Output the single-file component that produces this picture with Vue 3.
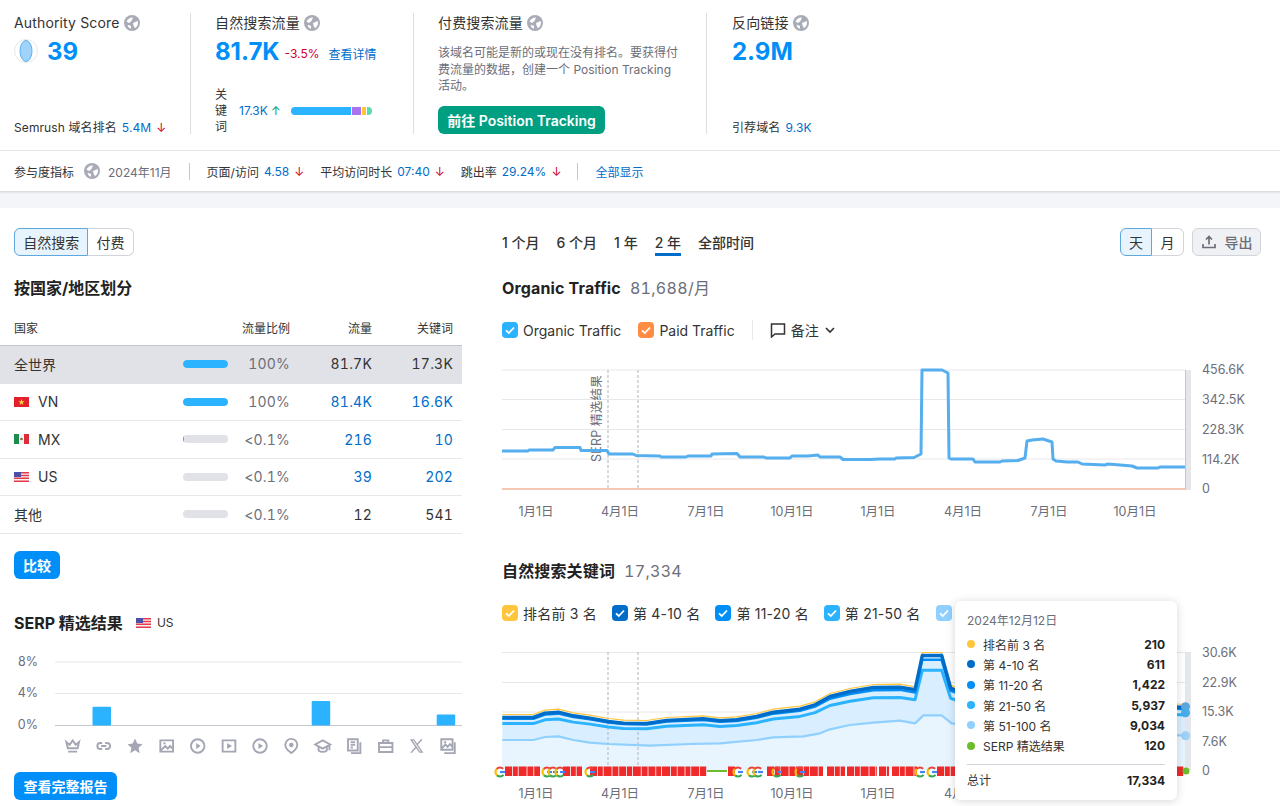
<script setup>
const rows = [
  { name: '全世界', flag: '', bar: 100, pct: '100%', traffic: '81.7K', kw: '17.3K', total: true },
  { name: 'VN', flag: 'vn', bar: 100, pct: '100%', traffic: '81.4K', kw: '16.6K', link: true },
  { name: 'MX', flag: 'mx', bar: 2, pct: '<0.1%', traffic: '216', kw: '10', link: true },
  { name: 'US', flag: 'us', bar: 0, pct: '<0.1%', traffic: '39', kw: '202', link: true },
  { name: '其他', flag: '', bar: 0, pct: '<0.1%', traffic: '12', kw: '541' },
];

const tabs = ['1 个月', '6 个月', '1 年', '2 年', '全部时间'];

// white land patches on the grey globe
const globeD = 'M2.500 6.500C4 3.500 6.500 2.300 9 2.500L7.500 6 5 8zM9 8l4.700-2c.8 2.500 0 5.500-2.700 7.200L9.500 10.500zM4.500 10l2.500 1v2.800C5.300 13.300 4 12 3.500 10.500z';

const serpIcons = [
  { d: 'M3.500 6.500l4.500 4L12 4.500l4 6 4.500-4-2 8.500h-13zM6 19.500h12' },
  { d: 'M10 8H7.500a4 4 0 000 8H10M14 8h2.500a4 4 0 010 8H14M8.500 12h7' },
  { f: 'M12 2l3 6.800 7 .7-5.200 4.800 1.500 7.200-6.300-3.700-6.300 3.700 1.500-7.200L2 9.500l7-.7z' },
  { d: 'M3.500 4.500h17v15h-17zM4 18l6-6 3.500 3.500 3-3.500 3.500 3.500M7.500 8.500h3' },
  { d: 'M12 3a9 9 0 100 18 9 9 0 000-18z', f: 'M10 8l6 4-6 4z' },
  { d: 'M3.500 4.500h17v15h-17z', f: 'M9.500 8l6.500 4-6.500 4z' },
  { d: 'M12 3a9 9 0 100 18 9 9 0 000-18z', f: 'M10 8l6 4-6 4z' },
  { d: 'M12 2.500a8 8 0 00-8 8c0 5 5 8.500 8 11 3-2.500 8-6 8-11a8 8 0 00-8-8z', f: 'M12 7.500a3 3 0 100 6 3 3 0 000-6z' },
  { d: 'M12 4.500L2 10l10 5.500L22 10zM6.500 13v5c3 2.500 8 2.500 11 0v-5M21 10.500v7' },
  { d: 'M4 3h13v15H4zM7.500 7h6M7.500 10.500h6M7.500 14h3M20.500 7v14.500H8' },
  { d: 'M3 8h18v12H3zM8.500 8V4.500h7V8M3 13.500h18M10 13.500h4' },
  { f: 'M3 3h5.500l4 5.500L17.500 3H20l-6.300 7.300L21 21h-5.500l-4.400-6L5.800 21H3.300l6.600-7.600zM6.500 4.800L16.400 19.200h1.300L7.800 4.800z' },
  { d: 'M3 3h15v14H3zM3.500 15l5-5 3 3 3-3.500 3 3M6.500 7h3M21 7v14.500H7' },
];
const iconXs = [72.7, 103.7, 135, 166.7, 197.7, 229, 260, 291.3, 322.7, 354, 385.7, 416.7, 448];

// traffic line, page coordinates
const trafficPts = [
  [502, 451], [528, 451], [529, 450], [553, 450], [555, 447.5], [580, 447.5], [581, 450.5], [607, 450.5],
  [609, 454], [633, 454], [636, 455.5], [660, 456], [661, 457], [686, 457], [688, 456], [711, 456],
  [712, 454], [737, 453.5], [740, 457], [764, 457], [766, 458], [790, 458], [792, 456], [808, 456],
  [818, 455], [820, 457], [840, 457], [843, 459.5], [870, 459.5], [880, 459], [895, 459], [896, 458],
  [914, 457.5], [921, 454], [922, 370], [942, 370], [948, 373], [949, 458], [951, 459], [973, 459],
  [975, 462], [1000, 462], [1002, 461], [1018, 460.5], [1025, 458], [1027, 441], [1032, 440], [1043, 439],
  [1052, 442], [1053, 459], [1056, 461], [1067, 462], [1078, 462], [1082, 464], [1105, 465], [1108, 464],
  [1132, 466], [1137, 468], [1158, 468], [1160, 467], [1185, 467],
];

const toPath = (pts) => pts.map((p, i) => (i ? 'L' : 'M') + p[0] + ' ' + p[1]).join(' ');
const page = (pts) => pts.map(([x, y]) => [490 + x / 3, 640 + y / 3]);

const topLine = page([
  [37, 228], [130, 228], [165, 215], [205, 212], [250, 223], [300, 230], [355, 240], [400, 245], [470, 246],
  [530, 237], [640, 232], [690, 238], [740, 235], [800, 225], [850, 212], [930, 203], [975, 190], [1020, 165],
  [1080, 150], [1150, 138], [1230, 137], [1275, 145], [1297, 42], [1355, 42], [1382, 140], [1395, 145],
  [1450, 160], [2085, 198],
]);
const lowLine = page([
  [37, 300], [130, 300], [165, 291], [205, 289], [250, 300], [300, 308], [355, 312], [480, 317], [600, 312],
  [690, 310], [800, 300], [850, 292], [940, 289], [990, 280], [1020, 268], [1080, 255], [1150, 248], [1230, 242],
  [1275, 250], [1300, 226], [1355, 226], [1385, 250], [1500, 260], [2085, 287],
]);
const BASE = 770;
const scaled = (r, shift = 0) => topLine.map(([x, y]) => [x, BASE - (BASE - y) * r + shift]);
const closeArea = (pts) => toPath(pts) + ` L${pts[pts.length - 1][0]} ${BASE} L${pts[0][0]} ${BASE} Z`;

const areaTop = closeArea(topLine);
const areaLow = closeArea(lowLine);
const yellowPath = toPath(scaled(1, -1.5));
const darkPath = toPath(scaled(1, 1.5));
const midPath = toPath(scaled(0.95, 0));
const brightPath = toPath(scaled(0.86));
const lowPath = toPath(lowLine);

// SERP feature flags along the bottom of the keywords chart
const flagRuns = [[505, 540], [563, 582], [590, 707], [728, 735], [767, 823], [827, 845], [847, 877], [879, 889], [892, 917], [937, 955], [1176, 1184]];
const flags = [];
const widths = [7, 5, 8, 6];
flagRuns.forEach(([a, b]) => {
  let x = a;
  let i = 0;
  while (x < b) {
    const w = Math.min(widths[i % 4], b - x);
    flags.push({ x, w });
    x += w + 0.8;
    i++;
  }
});
const googles = [500, 547, 553, 560, 590, 738, 752, 758, 777, 800, 920, 932];

const gridOne = [370, 399.5, 429.5, 459];
const gridTwo = [652.5, 682.5, 712, 742];
const yOne = [[369, '456.6K'], [399, '342.5K'], [429, '228.3K'], [459, '114.2K'], [488, '0']];
const yTwo = [[652, '30.6K'], [682, '22.9K'], [711, '15.3K'], [741, '7.6K'], [770, '0']];
const months = [[536, '1月1日'], [620, '4月1日'], [706, '7月1日'], [792, '10月1日'], [878, '1月1日'], [963, '4月1日'], [1049, '7月1日'], [1135, '10月1日']];

// the last label sits under the tooltip in the reference, only its box shows
const legendTwo = [
  { label: '排名前 3 名', cls: 'c-yellow' },
  { label: '第 4-10 名', cls: 'c-dark' },
  { label: '第 11-20 名', cls: 'c-mid' },
  { label: '第 21-50 名', cls: 'c-bright' },
  { label: '', cls: 'c-pale' },
];

const tipRows = [
  { label: '排名前 3 名', value: '210', cls: 'c-yellow' },
  { label: '第 4-10 名', value: '611', cls: 'c-dark' },
  { label: '第 11-20 名', value: '1,422', cls: 'c-mid' },
  { label: '第 21-50 名', value: '5,937', cls: 'c-bright' },
  { label: '第 51-100 名', value: '9,034', cls: 'c-pale' },
  { label: 'SERP 精选结果', value: '120', cls: 'c-green' },
];
</script>

<template>
  <div class="page">
    <section class="summary">
      <div class="metrics">
        <div class="metric m1">
          <div>
            <div class="m-title">Authority Score <svg class="globe" viewBox="0 0 16 16"><circle cx="8" cy="8" r="8" fill="#a9abb6"/><path :d="globeD" fill="#fff"/></svg></div>
            <div class="m-big score">
              <svg class="ring" viewBox="0 0 24 24"><circle cx="12" cy="12" r="11.500" fill="#fff" stroke="#e7e8ec"/><ellipse cx="12" cy="12" rx="6" ry="10.500" fill="#9fd3fb" stroke="#5eb2ee"/></svg>
              <span class="num">39</span>
            </div>
          </div>
          <div class="m-foot">Semrush 域名排名 <a class="lnk">5.4M</a> <span class="down">↓</span></div>
        </div>

        <div class="metric m2">
          <div>
            <div class="m-title">自然搜索流量 <svg class="globe" viewBox="0 0 16 16"><circle cx="8" cy="8" r="8" fill="#a9abb6"/><path :d="globeD" fill="#fff"/></svg></div>
            <div class="m-big">
              <span class="num">81.7K</span>
              <span class="delta">-3.5%</span>
              <a class="lnk detail">查看详情</a>
            </div>
          </div>
          <div class="kw-row">
            <span class="kw-label">关键词</span>
            <a class="lnk">17.3K</a>
            <span class="up">↑</span>
            <div class="stack">
              <i class="s-blue"></i><i class="s-purple"></i><i class="s-orange"></i><i class="s-green"></i>
            </div>
          </div>
        </div>

        <div class="metric m3">
          <div>
            <div class="m-title">付费搜索流量 <svg class="globe" viewBox="0 0 16 16"><circle cx="8" cy="8" r="8" fill="#a9abb6"/><path :d="globeD" fill="#fff"/></svg></div>
            <p class="note">该域名可能是新的或现在没有排名。要获得付费流量的数据，创建一个 Position Tracking 活动。</p>
          </div>
          <button class="btn green">前往 Position Tracking</button>
        </div>

        <div class="metric m4">
          <div>
            <div class="m-title">反向链接 <svg class="globe" viewBox="0 0 16 16"><circle cx="8" cy="8" r="8" fill="#a9abb6"/><path :d="globeD" fill="#fff"/></svg></div>
            <div class="m-big"><span class="num">2.9M</span></div>
          </div>
          <div class="m-foot">引荐域名 <a class="lnk">9.3K</a></div>
        </div>
      </div>

      <div class="engage">
        <span class="e-label">参与度指标</span>
        <svg class="globe e-globe" viewBox="0 0 16 16"><circle cx="8" cy="8" r="8" fill="#a9abb6"/><path :d="globeD" fill="#fff"/></svg>
        <span class="muted">2024年11月</span>
        <i class="vsep"></i>
        <span class="pair">页面/访问 <a class="lnk">4.58</a> <span class="down">↓</span></span>
        <span class="pair">平均访问时长 <a class="lnk">07:40</a> <span class="down">↓</span></span>
        <span class="pair">跳出率 <a class="lnk">29.24%</a> <span class="down">↓</span></span>
        <i class="vsep"></i>
        <a class="lnk">全部显示</a>
      </div>
    </section>

    <div class="strip"></div>

    <main class="body">
      <aside class="left">
        <div class="pad">
          <div class="seg">
            <span class="seg-item on">自然搜索</span>
            <span class="seg-item">付费</span>
          </div>
          <h3 class="title">按国家/地区划分</h3>
        </div>

        <div class="table">
          <div class="tr head">
            <span class="t-name">国家</span>
            <span class="t-share">流量比例</span>
            <span class="t-num">流量</span>
            <span class="t-kw">关键词</span>
          </div>
          <div v-for="r in rows" :key="r.name" class="tr" :class="{ total: r.total }">
            <span class="t-name">
              <svg v-if="r.flag === 'vn'" class="flag" viewBox="0 0 15 10"><rect width="15" height="10" fill="#e2202c"/><path d="M7.500 2l.8 2.300h2.300L8.700 5.700l.7 2.300-1.900-1.400L5.600 8l.7-2.300-1.900-1.400h2.300z" fill="#ffd83c"/></svg>
              <svg v-if="r.flag === 'mx'" class="flag" viewBox="0 0 15 10"><rect width="5" height="10" fill="#1f8a50"/><rect x="5" width="5" height="10" fill="#f4f4f4"/><rect x="10" width="5" height="10" fill="#dd2c3a"/><circle cx="7.500" cy="5" r="1.300" fill="#8a6a3c"/></svg>
              <svg v-if="r.flag === 'us'" class="flag" viewBox="0 0 15 10"><rect width="15" height="10" fill="#f4f4f4"/><path d="M0 .7h15M0 3.500h15M0 6.300h15M0 9.200h15" stroke="#e8394a" stroke-width="1.400"/><rect width="7" height="5" fill="#4a50a8"/></svg>
              {{ r.name }}
            </span>
            <span class="bar"><i :style="{ width: r.bar + '%' }"></i></span>
            <span class="t-pct">{{ r.pct }}</span>
            <span class="t-num" :class="{ lnk: r.link }">{{ r.traffic }}</span>
            <span class="t-kw" :class="{ lnk: r.link }">{{ r.kw }}</span>
          </div>
        </div>

        <div class="pad">
          <button class="btn blue compare">比较</button>
          <div class="serp-head">
            <h3 class="title inline">SERP 精选结果</h3>
            <svg class="flag" viewBox="0 0 15 10"><rect width="15" height="10" fill="#f4f4f4"/><path d="M0 .7h15M0 3.500h15M0 6.300h15M0 9.200h15" stroke="#e8394a" stroke-width="1.400"/><rect width="7" height="5" fill="#4a50a8"/></svg>
            <span class="us">US</span>
          </div>
        </div>

        <svg class="serp-chart" viewBox="0 650 462 109" width="462" height="109">
          <line x1="55" x2="462" y1="662" y2="662" class="grid"/>
          <line x1="55" x2="462" y1="693.500" y2="693.500" class="grid"/>
          <line x1="55" x2="462" y1="725.500" y2="725.500" stroke="#c4c7cf"/>
          <text x="38" y="666" class="axis" text-anchor="end">8%</text>
          <text x="38" y="697" class="axis" text-anchor="end">4%</text>
          <text x="38" y="729" class="axis" text-anchor="end">0%</text>
          <rect x="92.500" y="706.700" width="18.500" height="18.800" rx="1" fill="#2bb3ff"/>
          <rect x="311.700" y="701" width="18.500" height="24.500" rx="1" fill="#2bb3ff"/>
          <rect x="436.700" y="714.500" width="18.500" height="11" rx="1" fill="#2bb3ff"/>
          <g v-for="(ic, i) in serpIcons" :key="i" :transform="`translate(${iconXs[i] - 9} 737) scale(0.75)`">
            <path v-if="ic.d" :d="ic.d" fill="none" stroke="#a4a6b3" stroke-width="2.500"/>
            <path v-if="ic.f" :d="ic.f" fill="#a4a6b3" fill-rule="evenodd"/>
          </g>
        </svg>

        <div class="pad">
          <button class="btn blue report">查看完整报告</button>
        </div>
      </aside>

      <section class="right">
        <div class="toolbar">
          <div class="tabs">
            <span v-for="t in tabs" :key="t" class="tab" :class="{ active: t === '2 年' }">{{ t }}</span>
          </div>
          <div class="tools">
            <div class="seg small">
              <span class="seg-item on">天</span>
              <span class="seg-item">月</span>
            </div>
            <button class="export">
              <svg viewBox="0 0 16 16" width="16" height="16"><path d="M8 10.500V3M5 5.500L8 2.500l3 3M2 10v3.500h12V10" fill="none" stroke="#6c6e79" stroke-width="1.700"/></svg>
              导出
            </button>
          </div>
        </div>

        <div class="chart-title"><b>Organic Traffic</b><span>81,688/月</span></div>

        <div class="legend">
          <label class="chk"><i class="box c-bright"><svg viewBox="0 0 16 16"><path d="M4 8.300l2.800 2.700L12 5.500" fill="none" stroke="#fff" stroke-width="1.800"/></svg></i>Organic Traffic</label>
          <label class="chk"><i class="box c-orange"><svg viewBox="0 0 16 16"><path d="M4 8.300l2.800 2.700L12 5.500" fill="none" stroke="#fff" stroke-width="1.800"/></svg></i>Paid Traffic</label>
          <i class="lsep"></i>
          <span class="notes">
            <svg viewBox="0 0 16 16" width="16" height="16"><path d="M1.500 2h13v10H5l-3.500 3z" fill="none" stroke="#333" stroke-width="1.500"/></svg>
            备注
            <svg viewBox="0 0 12 12" width="12" height="12"><path d="M2 4l4 4 4-4" fill="none" stroke="#333" stroke-width="1.700"/></svg>
          </span>
        </div>

        <svg class="chart one" viewBox="502 360 778 170" width="778" height="170">
          <line v-for="y in gridOne" :key="y" x1="502" x2="1186" :y1="y" :y2="y" class="grid"/>
          <rect x="1185" y="370" width="6" height="120" fill="#e4e6ea"/>
          <line x1="1185.500" x2="1185.500" y1="370" y2="490" stroke="#c4c7cf"/>
          <line x1="608" x2="608" y1="370" y2="489" class="dash"/>
          <line x1="638" x2="638" y1="370" y2="489" class="dash"/>
          <text transform="translate(601 462) rotate(-90)" class="axis rot">SERP 精选结果</text>
          <line x1="502" x2="1185" y1="489" y2="489" stroke="#f5c8b6" stroke-width="2"/>
          <path :d="toPath(trafficPts)" fill="none" stroke="#55aeee" stroke-width="3" stroke-linejoin="round"/>
          <text v-for="y in yOne" :key="y[1]" x="1202" :y="y[0] + 4.500" class="axis">{{ y[1] }}</text>
          <text v-for="m in months" :key="m[0]" :x="m[0]" y="516" class="axis" text-anchor="middle">{{ m[1] }}</text>
        </svg>

        <div class="chart-title second"><b>自然搜索关键词</b><span>17,334</span></div>

        <div class="legend two">
          <label v-for="l in legendTwo" :key="l.cls" class="chk"><i class="box" :class="l.cls"><svg viewBox="0 0 16 16"><path d="M4 8.300l2.800 2.700L12 5.500" fill="none" stroke="#fff" stroke-width="1.800"/></svg></i>{{ l.label }}</label>
        </div>

        <div class="chart-wrap">
          <svg class="chart two" viewBox="502 640 778 166" width="778" height="166">
            <line v-for="y in gridTwo" :key="y" x1="502" x2="1186" :y1="y" :y2="y" class="grid"/>
            <rect x="1185" y="652" width="6" height="118" fill="#e3e6ea"/>
            <path :d="areaTop" fill="#d9eefe"/>
            <path :d="areaLow" fill="#e8f5ff"/>
            <line x1="608" x2="608" y1="652" y2="770" class="dash"/>
            <line x1="638" x2="638" y1="652" y2="770" class="dash"/>
            <path :d="yellowPath" fill="none" stroke="#ffc53d" stroke-width="1.200" stroke-linejoin="round"/>
            <path :d="lowPath" fill="none" stroke="#8fd0ff" stroke-width="2.200" stroke-linejoin="round"/>
            <path :d="brightPath" fill="none" stroke="#2bb3ff" stroke-width="3" stroke-linejoin="round"/>
            <path :d="midPath" fill="none" stroke="#008ff8" stroke-width="2.500" stroke-linejoin="round"/>
            <path :d="darkPath" fill="none" stroke="#006dca" stroke-width="3.500" stroke-linejoin="round"/>
            <rect v-for="(f, i) in flags" :key="i" :x="f.x" y="766.500" :width="f.w" height="9.500" fill="#ee2a2a"/>
            <line x1="707" x2="727" y1="771" y2="771" stroke="#6cbd2e" stroke-width="2"/>
            <g v-for="(gx, i) in googles" :key="'g' + i" :transform="`translate(${gx} 772)`" fill="none" stroke-width="2.200">
              <circle r="4.500" stroke="#ea4335" stroke-dasharray="7 21.300" stroke-dashoffset="-17"/>
              <circle r="4.500" stroke="#fbbc05" stroke-dasharray="7 21.300" stroke-dashoffset="-10"/>
              <circle r="4.500" stroke="#34a853" stroke-dasharray="7 21.300" stroke-dashoffset="-3"/>
              <path d="M0 0h5" stroke="#4285f4"/>
            </g>
            <circle cx="1185.500" cy="706.700" r="4.500" fill="#5ba7dd"/>
            <circle cx="1185.500" cy="712.700" r="4.500" fill="#48ace8"/>
            <circle cx="1185.500" cy="735.700" r="4.500" fill="#9fd0f5"/>
            <circle cx="1186" cy="771" r="3.500" fill="#6cbd2e"/>
            <text v-for="y in yTwo" :key="y[1]" x="1202" :y="y[0] + 4.500" class="axis">{{ y[1] }}</text>
            <text v-for="m in months" :key="'b' + m[0]" :x="m[0]" y="798" class="axis" text-anchor="middle">{{ m[1] }}</text>
          </svg>

          <div class="tip">
            <div class="tip-date">2024年12月12日</div>
            <div v-for="t in tipRows" :key="t.label" class="tip-row">
              <i class="dot" :class="t.cls"></i>
              <span class="tip-label">{{ t.label }}</span>
              <b>{{ t.value }}</b>
            </div>
            <div class="tip-total"><span>总计</span><b>17,334</b></div>
          </div>
        </div>
      </section>
    </main>
  </div>
</template>

<style>
html, body { margin: 0; background: #fff; }
</style>

<style scoped>
.page {
  width: 1280px;
  height: 806px;
  overflow: hidden;
  background: #fff;
  color: #333;
  font-family: Inter, "Noto Sans CJK SC", sans-serif;
  font-size: 12px;
}
a { text-decoration: none; }
.lnk { color: #006dca; }
.down {
  color: #d1002f;
  display: inline-block;
  width: 9px;
  text-align: center;
}
.up { color: #009f81; }
.muted { color: #6c6e79; }

.summary {
  height: 191px;
  border-bottom: 1px solid #dcdee3;
  box-shadow: 0 1px 2px rgba(0, 0, 0, 0.08);
  position: relative;
}
.metrics {
  display: grid;
  grid-template-columns: 191px 223px 293px 1fr;
  height: 151px;
  padding-top: 13px;
  box-sizing: border-box;
  border-bottom: 1px solid #e7e8ec;
}
.metric {
  height: 121px;
  padding-left: 24px;
  display: flex;
  flex-direction: column;
  justify-content: space-between;
  border-right: 1px solid #dcdee3;
  box-sizing: border-box;
}
.m1 { padding-left: 14px; }
.m4 { border-right: 0; padding-left: 25px; }
.m-title {
  font-size: 14px;
  line-height: 20px;
  letter-spacing: 0.15px;
  color: #333;
  display: flex;
  align-items: center;
  gap: 4px;
}
.globe { width: 16px; height: 16px; flex: none; }
.m-big {
  display: flex;
  align-items: center;
  height: 36px;
}
.num { font-size: 24px; font-weight: 700; color: #008ff8; }
.ring { width: 24px; height: 24px; margin-right: 9px; }
.delta { color: #d1002f; margin: 5px 0 0 5px; font-size: 12px; }
.detail { margin: 5px 0 0 9px; }
.m-foot {
  display: flex;
  align-items: center;
  gap: 5px;
  font-size: 12px;
  line-height: 16px;
  letter-spacing: 0.1px;
  margin-bottom: -2px;
}
.kw-row {
  display: flex;
  align-items: center;
  margin-bottom: -1px;
  gap: 3px;
  line-height: 16px;
}
.kw-label { width: 12px; margin-right: 9px; }
.stack {
  display: flex;
  gap: 1px;
  width: 81px;
  height: 8px;
  margin-left: 7px;
  border-radius: 4px;
  overflow: hidden;
}
.stack i { display: block; height: 100%; }
.s-blue { width: 61px; background: #2bb3ff; }
.s-purple { width: 9px; background: #a972ee; }
.s-orange { width: 4px; background: #ffc53d; }
.s-green { width: 5px; background: #59ddaa; }
.note {
  margin: 12px 0 0;
  width: 246px;
  line-height: 16.500px;
  color: #6c6e79;
}
.btn {
  border: 0;
  height: 28px;
  border-radius: 6px;
  color: #fff;
  font: 600 14px Inter, "Noto Sans CJK SC", sans-serif;
  padding: 0 9px;
}
.green { background: #009f81; align-self: flex-start; width: 167px; white-space: nowrap; }
.blue { background: #008ff8; display: block; }

.engage {
  height: 40px;
  display: flex;
  align-items: center;
  padding-left: 14px;
  font-size: 12px;
}
.e-label { margin-right: 10px; }
.e-globe { margin-right: 8px; }
.pair {
  display: inline-flex;
  align-items: center;
  gap: 5px;
  margin-right: 17px;
}
.vsep { width: 1px; height: 17px; background: #c4c7cf; margin: 0 17px 0 17px; }
.pair + .vsep { margin-left: 0; }

.strip { height: 16px; background: #f4f5f9; }

.body { display: flex; }
.left { width: 462px; flex: none; padding-top: 20px; }
.pad { padding-left: 14px; }
.seg { display: inline-flex; height: 28px; font-size: 14px; }
.seg-item {
  display: flex;
  align-items: center;
  justify-content: center;
  border: 1px solid #d1d4db;
  border-left: 0;
  padding: 0 8.200px;
  box-sizing: border-box;
}
.seg-item:first-child { border-radius: 6px 0 0 6px; }
.seg-item:last-child { border-radius: 0 6px 6px 0; }
.seg-item.on {
  background: #e7f4fe;
  border: 1px solid #5fa8de;
  color: #333;
}
.title { margin: 22px 0 0; font-size: 16px; line-height: 20px; font-weight: 700; color: #222; }
.title.inline { margin: 0; }

.table { margin-top: 22px; }
.tr {
  display: flex;
  align-items: center;
  height: 37.500px;
  box-sizing: border-box;
  padding: 0 9px 0 14px;
  font-size: 14px;
  border-bottom: 1px solid #e7e8ec;
}
.tr.head {
  height: 26px;
  padding-bottom: 10px;
  font-size: 12px;
  border-bottom: 1px solid #c4c7cf;
}
.tr.total { background: #e0e2e7; border-bottom: 0; padding-bottom: 2px; }
.t-name { flex: 1; display: flex; align-items: center; gap: 9px; }
.t-share { width: 62px; text-align: right; }
.t-num { width: 82px; text-align: right; }
.t-kw { width: 81px; text-align: right; }
.t-pct { width: 62px; text-align: right; color: #6c6e79; }
.tr:not(.head) .t-num, .tr:not(.head) .t-kw, .t-pct {
  font-variant-numeric: tabular-nums;
  letter-spacing: 0.2px;
}
.flag { width: 15px; height: 10px; flex: none; }
.bar {
  width: 45px;
  height: 8px;
  border-radius: 4px;
  background: #e0e2e7;
  overflow: hidden;
}
.bar i { display: block; height: 100%; background: #2bb3ff; border-radius: 4px; }

.compare { margin-top: 17px; padding: 0 9px; width: 46px; }
.serp-head {
  display: flex;
  align-items: center;
  margin-top: 34px;
  height: 20px;
}
.serp-head .flag { margin-left: 13px; }
.us { margin-left: 6px; font-size: 12px; }
.serp-chart { display: block; margin-top: 17px; overflow: visible; }
.report { margin-top: 13px; width: 103px; padding: 0; white-space: nowrap; }

.right { padding: 20px 0 0 40px; flex: 1; min-width: 0; }
.toolbar { display: flex; justify-content: space-between; align-items: center; height: 28px; }
.tabs { display: flex; gap: 17px; font-size: 14px; font-weight: 500; }
.tab { position: relative; color: #333; white-space: nowrap; }
.tab.active::after {
  content: '';
  position: absolute;
  left: 0;
  right: 0;
  bottom: -4px;
  height: 3px;
  background: #006dca;
}
.tools { display: flex; gap: 8px; padding-right: 19px; }
.seg.small .seg-item { width: 32px; padding: 0; }
.export {
  display: flex;
  align-items: center;
  justify-content: center;
  gap: 8px;
  width: 69px;
  height: 28px;
  border: 1px solid #d1d4db;
  border-radius: 6px;
  background: #f0f1f4;
  color: #6c6e79;
  font: 500 14px Inter, "Noto Sans CJK SC", sans-serif;
  padding: 0;
}
.chart-title { margin-top: 22px; font-size: 16px; line-height: 20px; display: flex; gap: 9px; }
.chart-title b { font-weight: 700; color: #222; letter-spacing: 0.15px; }
.chart-title span {
  color: #6c6e79;
  font-variant-numeric: tabular-nums;
  letter-spacing: 0.3px;
}
.chart-title.second { margin-top: 31px; }
.legend { display: flex; align-items: center; height: 20px; margin-top: 22px; font-size: 14px; gap: 17px; }
.legend.two { margin-top: 22px; gap: 15px; white-space: nowrap; letter-spacing: 0.2px; }
.chk { display: flex; align-items: center; gap: 5px; }
.box {
  width: 16px;
  height: 16px;
  border-radius: 4px;
  display: block;
  flex: none;
}
.box svg { display: block; }
.c-bright { background: #2bb3ff; }
.c-orange { background: #ff8c43; }
.c-yellow { background: #ffc53d; }
.c-dark { background: #006dca; }
.c-mid { background: #008ff8; }
.c-pale { background: #8fd0ff; }
.c-green { background: #6cbd2e; }
.lsep { width: 1px; height: 20px; background: #e7e8ec; }
.notes { display: flex; align-items: center; gap: 5px; }

.chart { display: block; overflow: visible; }
.chart.one { margin-top: 20px; }
.chart-wrap { position: relative; margin-top: 17px; height: 166px; }
.grid { stroke: #e7e8ec; stroke-width: 1; }
.dash { stroke: #b0b3bc; stroke-width: 1; stroke-dasharray: 3 2; }
.axis { font-size: 12.500px; fill: #6c6e79; font-family: Inter, "Noto Sans CJK SC", sans-serif; }
.rot { letter-spacing: 0.2px; }

.tip {
  position: absolute;
  left: 453px;
  top: -39px;
  width: 222px;
  height: 199px;
  box-sizing: border-box;
  padding: 12px 12px 0;
  background: #fff;
  border-radius: 6px;
  box-shadow: 0 1px 10px rgba(0, 0, 0, 0.16);
  font-size: 12px;
}
.tip-date { color: #6c6e79; line-height: 16px; margin-bottom: 5px; }
.tip-row { display: flex; align-items: center; height: 20.300px; }
.tip-label { flex: 1; margin-left: 8px; }
.tip-row b, .tip-total b { font-weight: 700; color: #222; }
.dot { width: 8px; height: 8px; border-radius: 50%; flex: none; }
.tip-total {
  display: flex;
  justify-content: space-between;
  align-items: center;
  border-top: 1px solid #d1d4db;
  margin-top: 8px;
  padding-top: 8px;
  line-height: 16px;
}
</style>
